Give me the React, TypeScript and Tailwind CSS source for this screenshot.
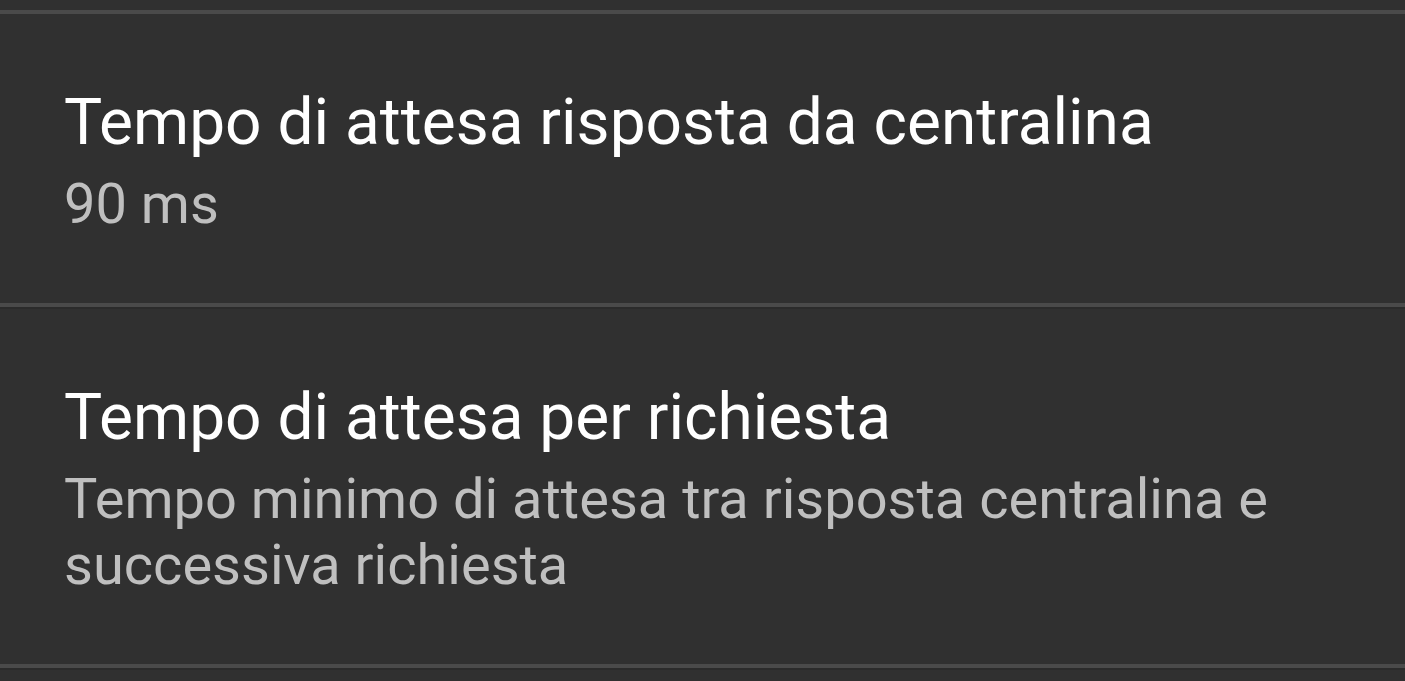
import React from 'react';

const rows = [
    {
        title: 'Tempo di attesa risposta da centralina',
        summary: '90 ms',
    },
    {
        title: 'Tempo di attesa per richiesta',
        summary: 'Tempo minimo di attesa tra risposta centralina e successiva richiesta',
    },
];

const Divider = () => (
    <div>
        <div className="h-[4px] bg-[#4a4a4a]" />
        <div className="h-[2px] bg-[#2b2b2b]" />
    </div>
);

export default function App() {
    return (
        <div
            className="w-[1405px] h-[681px] overflow-hidden bg-[#303030]"
            style={{ fontFamily: 'Roboto, "Noto Sans", sans-serif' }}
        >
            <div className="h-[10px]" />
            <div className="h-[4px] bg-[#4a4a4a]" />
            {rows.map((row, i) => (
                <div key={i}>
                    <div className="pl-[64px] pr-[64px] pt-[71px] pb-[66px] flex flex-col gap-[10px]">
                        <div className="text-[64px] leading-[76px] text-white">{row.title}</div>
                        <div className="text-[56px] leading-[66px] text-[#bfbfbf]">{row.summary}</div>
                    </div>
                    <Divider />
                </div>
            ))}
        </div>
    );
}
